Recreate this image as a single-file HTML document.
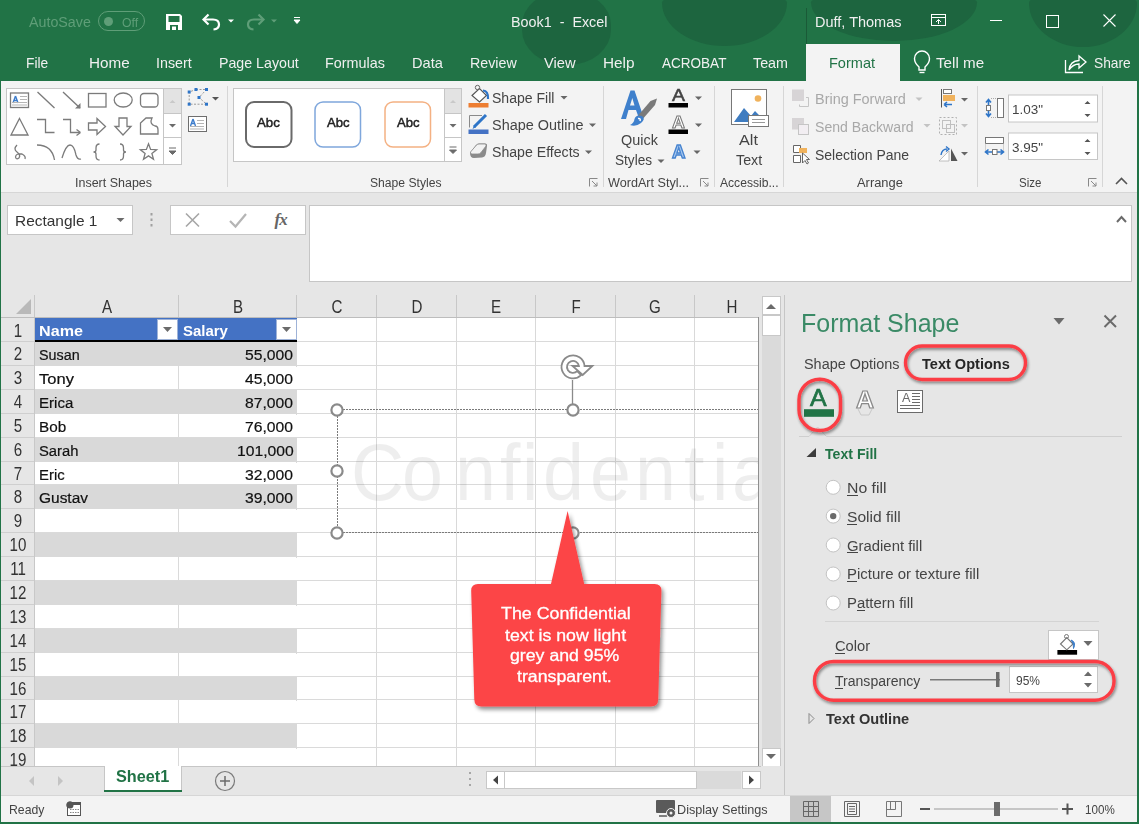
<!DOCTYPE html><html><head><meta charset="utf-8"><style>
html,body{margin:0;padding:0;}
body{width:1139px;height:824px;overflow:hidden;position:relative;font-family:"Liberation Sans", sans-serif;}
.t{position:absolute;white-space:nowrap;}
.r{position:absolute;box-sizing:border-box;}
svg.r{overflow:visible;}
</style></head><body>
<div class="r" style="left:0;top:0;width:1139px;height:824px;background:#217346"></div>
<div class="r" style="left:522px;top:-8px;width:89px;height:73px;border-radius:45% 45% 48% 48%;background:#1d653f;"></div>
<div class="r" style="left:662px;top:-2px;width:125px;height:48px;border-radius:8% 8% 50% 50% / 10% 10% 90% 90%;background:#1d653f;"></div>
<div class="r" style="left:811px;top:-2px;width:166px;height:43px;border-radius:8% 8% 50% 50% / 10% 10% 90% 90%;background:#1d653f;"></div>
<div class="r" style="left:1029px;top:-2px;width:108px;height:49px;border-radius:8% 8% 50% 50% / 10% 10% 90% 90%;background:#1d653f;"></div>
<div class="t" style="left:29.20px;top:15.15px;font-size:14px;line-height:14px;color:#5f9e78;font-weight:normal;transform:scaleX(1.0181);transform-origin:0 0;">AutoSave</div>
<div class="r" style="left:98px;top:11px;width:47px;height:20px;border:1px solid #5f9e78;border-radius:10px;"></div>
<div class="r" style="left:103.5px;top:16.5px;width:9px;height:9px;background:#5f9e78;border-radius:50%;"></div>
<div class="t" style="left:121.80px;top:15.50px;font-size:13px;line-height:13px;color:#5f9e78;font-weight:normal;transform:scaleX(0.9419);transform-origin:0 0;">Off</div>
<div class="t" style="left:510.60px;top:15.15px;font-size:14px;line-height:14px;color:#f0f0f0;font-weight:normal;transform:scaleX(1.0244);transform-origin:0 0;">Book1&nbsp; - &nbsp;Excel</div>
<div class="t" style="left:814.50px;top:15.15px;font-size:14px;line-height:14px;color:#f0f0f0;font-weight:normal;transform:scaleX(1.0359);transform-origin:0 0;">Duff, Thomas</div>
<div class="t" style="left:26.30px;top:55.30px;font-size:15px;line-height:15px;color:#f0f0f0;font-weight:normal;transform:scaleX(0.9174);transform-origin:0 0;">File</div>
<div class="t" style="left:88.50px;top:55.30px;font-size:15px;line-height:15px;color:#f0f0f0;font-weight:normal;transform:scaleX(1.0175);transform-origin:0 0;">Home</div>
<div class="t" style="left:156.30px;top:55.30px;font-size:15px;line-height:15px;color:#f0f0f0;font-weight:normal;transform:scaleX(0.9520);transform-origin:0 0;">Insert</div>
<div class="t" style="left:218.80px;top:55.30px;font-size:15px;line-height:15px;color:#f0f0f0;font-weight:normal;transform:scaleX(0.9466);transform-origin:0 0;">Page Layout</div>
<div class="t" style="left:325.20px;top:55.30px;font-size:15px;line-height:15px;color:#f0f0f0;font-weight:normal;transform:scaleX(0.9568);transform-origin:0 0;">Formulas</div>
<div class="t" style="left:412.30px;top:55.30px;font-size:15px;line-height:15px;color:#f0f0f0;font-weight:normal;transform:scaleX(0.9748);transform-origin:0 0;">Data</div>
<div class="t" style="left:470.20px;top:55.30px;font-size:15px;line-height:15px;color:#f0f0f0;font-weight:normal;transform:scaleX(0.9493);transform-origin:0 0;">Review</div>
<div class="t" style="left:544.00px;top:55.30px;font-size:15px;line-height:15px;color:#f0f0f0;font-weight:normal;transform:scaleX(0.9783);transform-origin:0 0;">View</div>
<div class="t" style="left:603.00px;top:55.30px;font-size:15px;line-height:15px;color:#f0f0f0;font-weight:normal;transform:scaleX(1.0227);transform-origin:0 0;">Help</div>
<div class="t" style="left:661.60px;top:55.30px;font-size:15px;line-height:15px;color:#f0f0f0;font-weight:normal;transform:scaleX(0.9020);transform-origin:0 0;">ACROBAT</div>
<div class="t" style="left:753.00px;top:55.30px;font-size:15px;line-height:15px;color:#f0f0f0;font-weight:normal;transform:scaleX(0.9537);transform-origin:0 0;">Team</div>
<div class="r" style="left:806px;top:44px;width:94px;height:38px;background:#f3f3f3;"></div>
<div class="t" style="left:829.00px;top:55.30px;font-size:15px;line-height:15px;color:#217346;font-weight:normal;transform:scaleX(0.9684);transform-origin:0 0;">Format</div>
<div class="t" style="left:936.40px;top:55.30px;font-size:15px;line-height:15px;color:#f0f0f0;font-weight:normal;transform:scaleX(1.0126);transform-origin:0 0;">Tell me</div>
<div class="t" style="left:1094.00px;top:55.30px;font-size:15px;line-height:15px;color:#f0f0f0;font-weight:normal;transform:scaleX(0.9175);transform-origin:0 0;">Share</div>
<div class="r" style="left:1px;top:81px;width:1136px;height:112px;background:#f3f3f3;border-bottom:1px solid #d6d6d6;"></div>
<div class="r" style="left:1px;top:193px;width:1136px;height:102px;background:#e6e6e6;"></div>
<div class="r" style="left:7px;top:205px;width:126px;height:30px;background:#fff;border:1px solid #c6c6c6;"></div>
<div class="t" style="left:14.50px;top:213.00px;font-size:15px;line-height:15px;color:#333;font-weight:normal;transform:scaleX(1.0300);transform-origin:0 0;">Rectangle 1</div>
<div class="r" style="left:170px;top:205px;width:136px;height:30px;background:#fff;border:1px solid #c6c6c6;"></div>
<div class="r" style="left:309px;top:205px;width:823px;height:77px;background:#fff;border:1px solid #c6c6c6;"></div>
<svg class="r" style="left:0px;top:0px;pointer-events:none;" width="1139" height="824" viewBox="0 0 1139 824"><rect x="227" y="86" width="1" height="101" fill="#d6d6d6"/><rect x="603" y="86" width="1" height="101" fill="#d6d6d6"/><rect x="714" y="86" width="1" height="101" fill="#d6d6d6"/><rect x="783" y="86" width="1" height="101" fill="#d6d6d6"/><rect x="977" y="86" width="1" height="101" fill="#d6d6d6"/><rect x="1102" y="86" width="1" height="101" fill="#d6d6d6"/><rect x="6.5" y="88.5" width="175" height="76" fill="#fff" stroke="#c6c6c6"/><rect x="164" y="89" width="17" height="24" fill="#e3e3e3"/><path d="M163.5 88.5 V164.5 M163.5 113.5 H181.5 M163.5 137.5 H181.5" stroke="#c6c6c6" fill="none"/><path d="M169.5 103 h6 l-3 -3 z" fill="#c9c9c9"/><path d="M169 124 h7 l-3.5 3.5 z" fill="#6b6b6b"/><path d="M169 148 h7 M169 151 h7 l-3.5 3.5 z" stroke="#6b6b6b" stroke-width="1" fill="#6b6b6b"/><rect x="10.5" y="93" width="18" height="14.5" stroke="#7b7b7b" stroke-width="1.3" fill="none"/><path d="M15.5 96 L13 103 M15.5 96 L18 103 M14 100.5 H17" stroke="#3d7ccb" stroke-width="1.4" fill="none"/><path d="M20 96.5 H27 M20 99.5 H27 M12 102.5 H27 M12 105 H27" stroke="#b5b5b5" stroke-width="1" fill="none"/><path d="M37.5 92 L54.5 108" stroke="#7b7b7b" stroke-width="1.3" fill="none"/><path d="M63 92 L80 108" stroke="#7b7b7b" stroke-width="1.3" fill="none"/><path d="M80.5 108.5 L80.5 103 L75 108.5 Z" fill="#7b7b7b"/><rect x="88.5" y="93.5" width="17.5" height="13.5" stroke="#7b7b7b" stroke-width="1.3" fill="none"/><ellipse cx="123.2" cy="100" rx="9" ry="7" stroke="#7b7b7b" stroke-width="1.3" fill="none"/><rect x="140.5" y="93.5" width="17.5" height="13.5" rx="3.5" stroke="#7b7b7b" stroke-width="1.3" fill="none"/><path d="M19.5 118.5 L28 135 H11 Z" stroke="#7b7b7b" stroke-width="1.3" fill="none"/><path d="M37 119.5 H45.5 V132.5 H54.5" stroke="#7b7b7b" stroke-width="1.3" fill="none"/><path d="M63 119.5 H70.5 V132.5 H80" stroke="#7b7b7b" stroke-width="1.3" fill="none"/><path d="M80.5 132.5 L76.5 129.5 M80.5 132.5 L76.5 135.5" stroke="#7b7b7b" stroke-width="1.3" fill="none"/><path d="M88.5 123 H97 V118.5 L105.5 126.5 L97 134.5 V130 H88.5 Z" stroke="#7b7b7b" stroke-width="1.3" fill="none"/><path d="M119 118 H127 V126.5 H131 L123 135 L115 126.5 H119 Z" stroke="#7b7b7b" stroke-width="1.3" fill="none"/><path d="M140.5 134 V123 L146 118 H152 Q149 124 155 126 Q158 126 158 130 V134 Z" stroke="#7b7b7b" stroke-width="1.3" fill="none"/><path d="M17 145 Q13 149 17 152 Q21 155 19 158 Q16 160 15.5 157 Q16 153 22 154 Q26 156 25 159" stroke="#7b7b7b" stroke-width="1.3" fill="none"/><path d="M37 145 Q52 145 54.5 160" stroke="#7b7b7b" stroke-width="1.3" fill="none"/><path d="M62 158 Q66 145 70 145 Q74 145 76 155 Q77.5 160 81 159" stroke="#7b7b7b" stroke-width="1.3" fill="none"/><path d="M99.5 144 Q96 144 96 148 V150 Q96 152 93.5 152 Q96 152 96 154 V156 Q96 160 99.5 160" stroke="#7b7b7b" stroke-width="1.3" fill="none"/><path d="M120 144 Q123.5 144 123.5 148 V150 Q123.5 152 126 152 Q123.5 152 123.5 154 V156 Q123.5 160 120 160" stroke="#7b7b7b" stroke-width="1.3" fill="none"/><polygon points="148.5,143.8 150.6,149.4 156.6,149.7 151.9,153.4 153.5,159.2 148.5,155.9 143.5,159.2 145.1,153.4 140.4,149.7 146.4,149.4" stroke="#7b7b7b" stroke-width="1.3" fill="none"/><path d="M196 89.5 L206.5 89.5 L199 97.5 L206.5 104.2 L189.2 104.2 L189.2 92 Z" stroke="#9a9a9a" stroke-width="1" stroke-dasharray="2,1.5" fill="none"/><rect x="187.7" y="90.5" width="3" height="3" fill="#2e75c8"/><rect x="194.5" y="88.0" width="3" height="3" fill="#2e75c8"/><rect x="205.0" y="88.0" width="3" height="3" fill="#2e75c8"/><rect x="197.5" y="96.0" width="3" height="3" fill="#2e75c8"/><rect x="187.7" y="102.7" width="3" height="3" fill="#2e75c8"/><rect x="205.0" y="102.7" width="3" height="3" fill="#2e75c8"/><path d="M212 97 h7 l-3.5 3.5 z" fill="#555"/><rect x="188.5" y="116.5" width="18" height="15" fill="#fff" stroke="#6e6e6e"/><path d="M193 119 L190.5 126 M193 119 L195.5 126 M191.5 123.5 H194.5" stroke="#3d7ccb" stroke-width="1.4" fill="none"/><path d="M197 120.5 H204 M197 123.5 H204 M190 126.5 H204 M190 129 H204" stroke="#b5b5b5" stroke-width="1" fill="none"/><rect x="233.5" y="88.5" width="228" height="73" fill="#fff" stroke="#c6c6c6"/><rect x="445" y="89" width="16" height="24" fill="#e3e3e3"/><path d="M444.5 88.5 V161.5 M444.5 113.5 H461.5 M444.5 137.5 H461.5" stroke="#c6c6c6" fill="none"/><path d="M450 103 h6 l-3 -3 z" fill="#c9c9c9"/><path d="M449.5 124 h7 l-3.5 3.5 z" fill="#6b6b6b"/><path d="M449.5 147 h7 M449.5 150 h7 l-3.5 3.5 z" stroke="#6b6b6b" stroke-width="1" fill="#6b6b6b"/><rect x="246" y="102" width="45.5" height="45" rx="8" fill="#fff" stroke="#6a6a6a" stroke-width="2"/><rect x="315" y="102" width="45.5" height="45" rx="8" fill="#fff" stroke="#7fa7dc" stroke-width="1.5"/><rect x="385" y="102" width="45.5" height="45" rx="8" fill="#fff" stroke="#f4b183" stroke-width="1.5"/><rect x="468.5" y="103" width="20" height="4.5" fill="#ed7d31"/><path d="M472 95.5 L479.5 88.5 L486.5 95.5 L479.5 102 Z" fill="#fff" stroke="#555" stroke-width="1.1"/><circle cx="477.5" cy="87.5" r="2.2" fill="none" stroke="#666" stroke-width="1"/><path d="M483 90.5 Q488.5 91 488 99" stroke="#2e75c8" stroke-width="2.2" fill="none"/><rect x="468.5" y="129.5" width="20" height="4.5" fill="#4472c4"/><path d="M469.5 127.5 V115.5 H482" stroke="#8a8a8a" stroke-width="1" fill="none"/><path d="M474 127 L486 115" stroke="#2e75c8" stroke-width="3" fill="none"/><path d="M472.5 129 L474 125.5 L475.8 127.2 Z" fill="#2e75c8"/><path d="M470 153 L476 145 Q477 143.5 479 143.5 L485 143.5 Q487.5 143.5 487 146 L486 153 Q485.5 157 482 157.5 L474 158 Q470 158 470 153 Z" fill="#8a8a8a"/><path d="M470.5 152 L476.5 145 Q477.5 144 479 144 L485 144 Q486.5 144 486 146 L481 152.5 Q480 154 478 154 L472 154 Q470 154 470.5 152 Z" fill="#f2f2f2" stroke="#8a8a8a" stroke-width="0.8"/><path d="M560.5 96 h7 l-3.5 3.5 z" fill="#666"/><path d="M589 123.5 h7 l-3.5 3.5 z" fill="#666"/><path d="M585 150.5 h7 l-3.5 3.5 z" fill="#666"/><path d="M695 96.5 h7 l-3.5 3.5 z" fill="#666"/><path d="M695 123.5 h7 l-3.5 3.5 z" fill="#666"/><path d="M693.5 150.5 h7 l-3.5 3.5 z" fill="#666"/><path d="M657.5 159.5 h7 l-3.5 3.5 z" fill="#666"/><path d="M915.5 97.5 h7 l-3.5 3.5 z" fill="#c3c3c3"/><path d="M923.5 124 h7 l-3.5 3.5 z" fill="#c3c3c3"/><path d="M961 98 h7 l-3.5 3.5 z" fill="#666"/><path d="M961 124 h7 l-3.5 3.5 z" fill="#c3c3c3"/><path d="M961 152 h7 l-3.5 3.5 z" fill="#666"/><path d="M589.5 186.5 V178.5 H597.5" stroke="#888" stroke-width="1" fill="none"/><path d="M592 181 L597 186 M597 182.5 V186 H593.5" stroke="#888" stroke-width="1" fill="none"/><path d="M700.5 186.5 V178.5 H708.5" stroke="#888" stroke-width="1" fill="none"/><path d="M703 181 L708 186 M708 182.5 V186 H704.5" stroke="#888" stroke-width="1" fill="none"/><path d="M1088.5 186.5 V178.5 H1096.5" stroke="#888" stroke-width="1" fill="none"/><path d="M1091 181 L1096 186 M1096 182.5 V186 H1092.5" stroke="#888" stroke-width="1" fill="none"/><path d="M621 119 L630.5 90.5 L634.5 90.5 L643.5 117 L638.5 117 L636 110 L628.5 110 L626 119 Z M630 105.5 L634.5 105.5 L632.3 98 Z" fill="#3f80cc"/><path d="M636 118 L650.5 101 L657 98.5 L655 105 L641 121 Z" fill="#7a7a7a"/><path d="M642 116 Q646 119 641 123 Q636 127 630 125 Q634 123 634.5 119 Q636 114 642 116 Z" fill="#3f80cc"/><path d="M638 118.5 Q641 118 640 121" stroke="#fff" stroke-width="1.5" fill="none"/><rect x="668.5" y="103" width="19.5" height="4.5" fill="#000"/><rect x="668.5" y="129.5" width="19.5" height="4.5" fill="#000"/><rect x="731.5" y="89.5" width="35" height="35" fill="#fff" stroke="#777"/><circle cx="758" cy="98.5" r="3.3" fill="#f0b25c"/><path d="M734 122 L744 108 L751 116 L755 111 L762 118 V122 Z" fill="#3f7cc0"/><rect x="748.5" y="115.5" width="20" height="11" fill="#fff" stroke="#777"/><path d="M752 119.5 H765 M752 122.5 H765" stroke="#999" stroke-width="1"/><rect x="792" y="89.5" width="12" height="11.5" fill="#d7d4d6"/><path d="M799.5 104.5 V106.5 H808.5 V97.5 H806" stroke="#c5c5c5" stroke-width="1" fill="none"/><rect x="792" y="118" width="12" height="11.5" fill="#d7d4d6"/><rect x="798.5" y="124.5" width="10" height="10" fill="#f2eef2" stroke="#c5c5c5"/><path d="M793.5 145.5 H800.5 V152.5 H793.5 Z M793.5 155.5 H800.5 V162.5 H793.5 Z" stroke="#666" stroke-width="1" fill="#fff"/><rect x="799" y="148" width="8" height="5" fill="#f0b25c"/><path d="M802.5 153 L802.5 163 L805 160.5 L807 164 L808.5 163 L806.5 159.5 L809.5 159.5 Z" fill="#fff" stroke="#555" stroke-width="0.9"/><path d="M941.5 89 V107.5" stroke="#555" stroke-width="1"/><rect x="943.5" y="89.5" width="8" height="4" fill="#fff" stroke="#777"/><rect x="943" y="95" width="12" height="6" fill="#f0b25c"/><path d="M944 104.5 H952 M944 104.5 L947 102 M944 104.5 L947 107" stroke="#2e75c8" stroke-width="1.6" fill="none"/><path d="M939.5 117.5 h17 v17 h-17 z" stroke="#b0b0b0" stroke-width="1" stroke-dasharray="2,2" fill="none"/><rect x="942.5" y="120.5" width="8" height="8" fill="none" stroke="#c0c0c0"/><rect x="946.5" y="124.5" width="8" height="8" fill="none" stroke="#c0c0c0"/><path d="M939 161 L949 151 V161 Z" fill="#fff" stroke="#b0b0b0" stroke-width="0.8"/><path d="M951 148.5 V161 H957.5 Z" fill="#555"/><path d="M941 155 Q942 149 947 149" stroke="#2e75c8" stroke-width="1.4" fill="none"/><path d="M946 146.5 L949 149 L946 151.5" stroke="#2e75c8" stroke-width="1.4" fill="none"/><path d="M988.5 100 V116 M986 102.5 L988.5 99.5 L991 102.5 M986 113.5 L988.5 116.5 L991 113.5" stroke="#2e75c8" stroke-width="1.6" fill="none"/><rect x="986.5" y="105.5" width="4" height="5" fill="#fff" stroke="#777"/><path d="M991 98.5 H997 M991 117.5 H997" stroke="#aaa" stroke-width="1" stroke-dasharray="1,1"/><rect x="997.5" y="98.5" width="6" height="19" fill="#fff" stroke="#777"/><rect x="985.5" y="137.5" width="18" height="6" fill="#fff" stroke="#777"/><path d="M985.5 143.5 V152 M1003.5 143.5 V152" stroke="#aaa" stroke-width="1" stroke-dasharray="1,1"/><path d="M986 152 H1003 M988.5 149.5 L985.5 152 L988.5 154.5 M1000.5 149.5 L1003.5 152 L1000.5 154.5" stroke="#2e75c8" stroke-width="1.6" fill="none"/><rect x="992.5" y="149.5" width="4.5" height="5" fill="#fff" stroke="#777"/><rect x="1008.5" y="95" width="89" height="27" fill="#fff" stroke="#c6c6c6"/><rect x="1008.5" y="133" width="89" height="26.5" fill="#fff" stroke="#c6c6c6"/><path d="M1084.5 104 h6 l-3 -3 z M1084.5 114 h6 l-3 3 z" fill="#555"/><path d="M1084.5 142 h6 l-3 -3 z M1084.5 152 h6 l-3 3 z" fill="#555"/><path d="M1116 184 L1121.5 178.5 L1127 184" stroke="#555" stroke-width="1.6" fill="none"/></svg>
<div class="t" style="left:74.60px;top:176.64px;font-size:12px;line-height:12px;color:#444;font-weight:normal;transform:scaleX(1.0405);transform-origin:0 0;">Insert Shapes</div>
<div class="t" style="left:369.50px;top:176.64px;font-size:12px;line-height:12px;color:#444;font-weight:normal;transform:scaleX(1.0113);transform-origin:0 0;">Shape Styles</div>
<div class="t" style="left:608.40px;top:176.64px;font-size:12px;line-height:12px;color:#444;font-weight:normal;transform:scaleX(1.0506);transform-origin:0 0;">WordArt Styl...</div>
<div class="t" style="left:719.50px;top:176.64px;font-size:12px;line-height:12px;color:#444;font-weight:normal;transform:scaleX(1.0086);transform-origin:0 0;">Accessib...</div>
<div class="t" style="left:856.70px;top:176.64px;font-size:12px;line-height:12px;color:#444;font-weight:normal;transform:scaleX(1.0749);transform-origin:0 0;">Arrange</div>
<div class="t" style="left:1018.90px;top:176.64px;font-size:12px;line-height:12px;color:#444;font-weight:normal;transform:scaleX(0.9571);transform-origin:0 0;">Size</div>
<div class="t" style="left:257.40px;top:116.92px;font-size:12.5px;line-height:12.5px;color:#222;font-weight:normal;transform:scaleX(1.0558);transform-origin:0 0;-webkit-text-stroke:0.45px #222;">Abc</div>
<div class="t" style="left:327.00px;top:116.92px;font-size:12.5px;line-height:12.5px;color:#222;font-weight:normal;transform:scaleX(1.0465);transform-origin:0 0;-webkit-text-stroke:0.45px #222;">Abc</div>
<div class="t" style="left:396.80px;top:116.92px;font-size:12.5px;line-height:12.5px;color:#222;font-weight:normal;transform:scaleX(1.0465);transform-origin:0 0;-webkit-text-stroke:0.45px #222;">Abc</div>
<div class="t" style="left:671.50px;top:87.96px;font-size:16px;line-height:16px;color:#444;font-weight:normal;transform:scaleX(1.2150);transform-origin:0 0;-webkit-text-stroke:0.5px #444;">A</div>
<div class="t" style="left:671.50px;top:114.66px;font-size:16px;line-height:16px;color:#fff;font-weight:bold;transform:scaleX(1.1207);transform-origin:0 0;-webkit-text-stroke:0.9px #777;">A</div>
<div class="t" style="left:671.50px;top:143.26px;font-size:18px;line-height:18px;color:#a9c9f0;font-weight:bold;transform:scaleX(1.0385);transform-origin:0 0;-webkit-text-stroke:1.3px #4683cf;">A</div>
<div class="t" style="left:491.80px;top:91.15px;font-size:14px;line-height:14px;color:#444;font-weight:normal;transform:scaleX(1.0032);transform-origin:0 0;">Shape Fill</div>
<div class="t" style="left:491.80px;top:117.95px;font-size:14px;line-height:14px;color:#444;font-weight:normal;transform:scaleX(1.0316);transform-origin:0 0;">Shape Outline</div>
<div class="t" style="left:491.80px;top:144.85px;font-size:14px;line-height:14px;color:#444;font-weight:normal;transform:scaleX(1.0081);transform-origin:0 0;">Shape Effects</div>
<div class="t" style="left:621.00px;top:133.15px;font-size:14px;line-height:14px;color:#444;font-weight:normal;transform:scaleX(1.0306);transform-origin:0 0;">Quick</div>
<div class="t" style="left:615.40px;top:152.65px;font-size:14px;line-height:14px;color:#444;font-weight:normal;transform:scaleX(0.9711);transform-origin:0 0;">Styles</div>
<div class="t" style="left:739.30px;top:133.15px;font-size:14px;line-height:14px;color:#444;font-weight:normal;transform:scaleX(1.1595);transform-origin:0 0;">Alt</div>
<div class="t" style="left:735.80px;top:152.65px;font-size:14px;line-height:14px;color:#444;font-weight:normal;transform:scaleX(1.0195);transform-origin:0 0;">Text</div>
<div class="t" style="left:814.70px;top:92.35px;font-size:14px;line-height:14px;color:#a8a8a8;font-weight:normal;transform:scaleX(1.0319);transform-origin:0 0;">Bring Forward</div>
<div class="t" style="left:814.70px;top:119.85px;font-size:14px;line-height:14px;color:#a8a8a8;font-weight:normal;transform:scaleX(1.0061);transform-origin:0 0;">Send Backward</div>
<div class="t" style="left:814.70px;top:147.85px;font-size:14px;line-height:14px;color:#444;font-weight:normal;transform:scaleX(0.9989);transform-origin:0 0;">Selection Pane</div>
<div class="t" style="left:1011.70px;top:103.30px;font-size:13px;line-height:13px;color:#444;font-weight:normal;transform:scaleX(1.0368);transform-origin:0 0;">1.03&quot;</div>
<div class="t" style="left:1011.70px;top:140.70px;font-size:13px;line-height:13px;color:#444;font-weight:normal;transform:scaleX(1.0368);transform-origin:0 0;">3.95&quot;</div>
<svg class="r" style="left:0px;top:0px;pointer-events:none;" width="1139" height="824" viewBox="0 0 1139 824"><path d="M166 14 H180 L182 16 V30 H166 Z" fill="#fff"/><rect x="168.5" y="16" width="11" height="6" fill="#217346"/><rect x="170" y="25" width="8" height="5" fill="#217346"/><rect x="172" y="26.5" width="4" height="3.5" fill="#fff"/><path d="M204 19.5 H213 Q219 19.5 219 24.5 Q219 29 213.5 29.5" stroke="#fff" stroke-width="2.2" fill="none"/><path d="M208.5 14.5 L203.5 19.5 L208.5 24.5" stroke="#fff" stroke-width="2.2" fill="none"/><path d="M228 19.5 h6 l-3 3 z" fill="#fff"/><path d="M263 19.5 H254 Q248 19.5 248 24.5 Q248 29 253.5 29.5" stroke="#5f9e78" stroke-width="2.2" fill="none"/><path d="M258.5 14.5 L263.5 19.5 L258.5 24.5" stroke="#5f9e78" stroke-width="2.2" fill="none"/><path d="M271 19.5 h6 l-3 3 z" fill="#5f9e78"/><path d="M294 17.5 h6 M294 20 h6 l-3 3.5 z" stroke="#fff" stroke-width="1" fill="#fff"/><rect x="931.5" y="14.5" width="14" height="11" fill="none" stroke="#fff" stroke-width="1"/><path d="M931.5 17.5 H945.5 M938.5 24 V19.5 M936 22 L938.5 19.5 L941 22" stroke="#fff" stroke-width="1" fill="none"/><path d="M990 20.5 H1002" stroke="#fff" stroke-width="1"/><rect x="1046.5" y="15.5" width="12" height="12" fill="none" stroke="#fff" stroke-width="1"/><path d="M1103.5 14.5 L1115.5 26.5 M1115.5 14.5 L1103.5 26.5" stroke="#fff" stroke-width="1.1"/><rect x="806" y="8" width="1" height="36" fill="#1a5a37"/><path d="M919 67 Q914.5 63 914.5 58.5 A7.5 7.5 0 0 1 929.5 58.5 Q929.5 63 925 67 V70 H919 Z" stroke="#fff" stroke-width="1.4" fill="none"/><path d="M919.5 72.5 H924.5" stroke="#fff" stroke-width="1.4"/><path d="M1065.5 60 V72.5 H1083" stroke="#fff" stroke-width="1.3" fill="none"/><path d="M1069 70 Q1070 61 1079 60.5 V56 L1086 62 L1079 68 V64 Q1073 64 1069 70 Z" stroke="#fff" stroke-width="1.3" fill="none"/></svg>
<div class="r" style="left:1px;top:295px;width:784px;height:471px;background:#e6e6e6;"></div>
<div class="r" style="left:35px;top:318px;width:723px;height:448px;background:#fff;"></div>
<svg class="r" style="left:0px;top:0px;pointer-events:none;" width="1139" height="824" viewBox="0 0 1139 824"><rect x="178" y="295" width="1" height="23" fill="#c8c8c8"/><rect x="296" y="295" width="1" height="23" fill="#c8c8c8"/><rect x="376" y="295" width="1" height="23" fill="#c8c8c8"/><rect x="456" y="295" width="1" height="23" fill="#c8c8c8"/><rect x="535" y="295" width="1" height="23" fill="#c8c8c8"/><rect x="615" y="295" width="1" height="23" fill="#c8c8c8"/><rect x="694" y="295" width="1" height="23" fill="#c8c8c8"/><rect x="34" y="295" width="1" height="471" fill="#c8c8c8"/><rect x="1" y="317" width="757" height="1" fill="#bdbdbd"/><rect x="178" y="318" width="1" height="448" fill="#d9d9d9"/><rect x="296" y="318" width="1" height="448" fill="#d9d9d9"/><rect x="376" y="318" width="1" height="448" fill="#d9d9d9"/><rect x="456" y="318" width="1" height="448" fill="#d9d9d9"/><rect x="535" y="318" width="1" height="448" fill="#d9d9d9"/><rect x="615" y="318" width="1" height="448" fill="#d9d9d9"/><rect x="694" y="318" width="1" height="448" fill="#d9d9d9"/><rect x="1" y="341" width="33" height="1" fill="#cfcfcf"/><rect x="35" y="341" width="723" height="1" fill="#dadada"/><rect x="1" y="365" width="33" height="1" fill="#cfcfcf"/><rect x="35" y="365" width="723" height="1" fill="#dadada"/><rect x="1" y="389" width="33" height="1" fill="#cfcfcf"/><rect x="35" y="389" width="723" height="1" fill="#dadada"/><rect x="1" y="413" width="33" height="1" fill="#cfcfcf"/><rect x="35" y="413" width="723" height="1" fill="#dadada"/><rect x="1" y="437" width="33" height="1" fill="#cfcfcf"/><rect x="35" y="437" width="723" height="1" fill="#dadada"/><rect x="1" y="461" width="33" height="1" fill="#cfcfcf"/><rect x="35" y="461" width="723" height="1" fill="#dadada"/><rect x="1" y="484" width="33" height="1" fill="#cfcfcf"/><rect x="35" y="484" width="723" height="1" fill="#dadada"/><rect x="1" y="508" width="33" height="1" fill="#cfcfcf"/><rect x="35" y="508" width="723" height="1" fill="#dadada"/><rect x="1" y="532" width="33" height="1" fill="#cfcfcf"/><rect x="35" y="532" width="723" height="1" fill="#dadada"/><rect x="1" y="556" width="33" height="1" fill="#cfcfcf"/><rect x="35" y="556" width="723" height="1" fill="#dadada"/><rect x="1" y="580" width="33" height="1" fill="#cfcfcf"/><rect x="35" y="580" width="723" height="1" fill="#dadada"/><rect x="1" y="604" width="33" height="1" fill="#cfcfcf"/><rect x="35" y="604" width="723" height="1" fill="#dadada"/><rect x="1" y="628" width="33" height="1" fill="#cfcfcf"/><rect x="35" y="628" width="723" height="1" fill="#dadada"/><rect x="1" y="652" width="33" height="1" fill="#cfcfcf"/><rect x="35" y="652" width="723" height="1" fill="#dadada"/><rect x="1" y="676" width="33" height="1" fill="#cfcfcf"/><rect x="35" y="676" width="723" height="1" fill="#dadada"/><rect x="1" y="699" width="33" height="1" fill="#cfcfcf"/><rect x="35" y="699" width="723" height="1" fill="#dadada"/><rect x="1" y="723" width="33" height="1" fill="#cfcfcf"/><rect x="35" y="723" width="723" height="1" fill="#dadada"/><rect x="1" y="747" width="33" height="1" fill="#cfcfcf"/><rect x="35" y="747" width="723" height="1" fill="#dadada"/><rect x="35" y="341" width="262" height="25" fill="#d9d9d9"/><rect x="35" y="367" width="262" height="22" fill="#ffffff"/><rect x="178" y="366" width="1" height="24" fill="#dadada"/><rect x="35" y="390" width="262" height="24" fill="#d9d9d9"/><rect x="35" y="415" width="262" height="22" fill="#ffffff"/><rect x="178" y="414" width="1" height="24" fill="#dadada"/><rect x="35" y="438" width="262" height="24" fill="#d9d9d9"/><rect x="35" y="463" width="262" height="21" fill="#ffffff"/><rect x="178" y="462" width="1" height="23" fill="#dadada"/><rect x="35" y="485" width="262" height="24" fill="#d9d9d9"/><rect x="35" y="510" width="262" height="22" fill="#ffffff"/><rect x="178" y="509" width="1" height="24" fill="#dadada"/><rect x="35" y="533" width="262" height="24" fill="#d9d9d9"/><rect x="35" y="558" width="262" height="22" fill="#ffffff"/><rect x="178" y="557" width="1" height="24" fill="#dadada"/><rect x="35" y="581" width="262" height="24" fill="#d9d9d9"/><rect x="35" y="606" width="262" height="22" fill="#ffffff"/><rect x="178" y="605" width="1" height="24" fill="#dadada"/><rect x="35" y="629" width="262" height="24" fill="#d9d9d9"/><rect x="35" y="654" width="262" height="22" fill="#ffffff"/><rect x="178" y="653" width="1" height="24" fill="#dadada"/><rect x="35" y="677" width="262" height="23" fill="#d9d9d9"/><rect x="35" y="701" width="262" height="22" fill="#ffffff"/><rect x="178" y="700" width="1" height="24" fill="#dadada"/><rect x="35" y="724" width="262" height="24" fill="#d9d9d9"/><rect x="35" y="749" width="262" height="22" fill="#ffffff"/><rect x="178" y="748" width="1" height="24" fill="#dadada"/><rect x="35" y="318" width="262" height="22" fill="#4472c4"/><rect x="35" y="340" width="262" height="2" fill="#000"/><rect x="157.5" y="319.5" width="20" height="20" fill="#fff" stroke="#9fb3d8" stroke-width="1"/><path d="M163 327 h9 l-4.5 5 z" fill="#6b6b6b"/><rect x="276.5" y="319.5" width="20" height="20" fill="#fff" stroke="#9fb3d8" stroke-width="1"/><path d="M282 327 h9 l-4.5 5 z" fill="#6b6b6b"/><rect x="758" y="317" width="1" height="449" fill="#8f8f8f"/><rect x="762" y="297" width="19" height="469" fill="#dadada"/><rect x="762.5" y="296.5" width="18" height="18" fill="#fff" stroke="#c8c8c8"/><path d="M766 309 h10 l-5 -5 z" fill="#6b6b6b"/><rect x="762.5" y="315.5" width="18" height="20" fill="#fff" stroke="#c8c8c8"/><rect x="762.5" y="748.5" width="18" height="18" fill="#fff" stroke="#c8c8c8"/><path d="M766 754 h10 l-5 5 z" fill="#6b6b6b"/><rect x="784" y="295" width="1" height="500" fill="#c6c6c6"/></svg>
<div class="t" style="left:6.5px;width:200px;text-align:center;top:297.76px;font-size:18px;line-height:18px;color:#333;font-weight:normal;transform:scaleX(0.84);transform-origin:50% 0;">A</div>
<div class="t" style="left:137.5px;width:200px;text-align:center;top:297.76px;font-size:18px;line-height:18px;color:#333;font-weight:normal;transform:scaleX(0.84);transform-origin:50% 0;">B</div>
<div class="t" style="left:236.5px;width:200px;text-align:center;top:297.76px;font-size:18px;line-height:18px;color:#333;font-weight:normal;transform:scaleX(0.84);transform-origin:50% 0;">C</div>
<div class="t" style="left:316.5px;width:200px;text-align:center;top:297.76px;font-size:18px;line-height:18px;color:#333;font-weight:normal;transform:scaleX(0.84);transform-origin:50% 0;">D</div>
<div class="t" style="left:396.0px;width:200px;text-align:center;top:297.76px;font-size:18px;line-height:18px;color:#333;font-weight:normal;transform:scaleX(0.84);transform-origin:50% 0;">E</div>
<div class="t" style="left:475.5px;width:200px;text-align:center;top:297.76px;font-size:18px;line-height:18px;color:#333;font-weight:normal;transform:scaleX(0.84);transform-origin:50% 0;">F</div>
<div class="t" style="left:555.0px;width:200px;text-align:center;top:297.76px;font-size:18px;line-height:18px;color:#333;font-weight:normal;transform:scaleX(0.84);transform-origin:50% 0;">G</div>
<div class="t" style="left:632.0px;width:200px;text-align:center;top:297.76px;font-size:18px;line-height:18px;color:#333;font-weight:normal;transform:scaleX(0.84);transform-origin:50% 0;">H</div>
<div class="t" style="left:3.0px;width:30px;text-align:center;top:321.76px;font-size:18px;line-height:18px;color:#333;font-weight:normal;transform:scaleX(0.84);transform-origin:50% 0;">1</div>
<div class="t" style="left:3.0px;width:30px;text-align:center;top:344.76px;font-size:18px;line-height:18px;color:#333;font-weight:normal;transform:scaleX(0.84);transform-origin:50% 0;">2</div>
<div class="t" style="left:3.0px;width:30px;text-align:center;top:368.76px;font-size:18px;line-height:18px;color:#333;font-weight:normal;transform:scaleX(0.84);transform-origin:50% 0;">3</div>
<div class="t" style="left:3.0px;width:30px;text-align:center;top:392.76px;font-size:18px;line-height:18px;color:#333;font-weight:normal;transform:scaleX(0.84);transform-origin:50% 0;">4</div>
<div class="t" style="left:3.0px;width:30px;text-align:center;top:416.76px;font-size:18px;line-height:18px;color:#333;font-weight:normal;transform:scaleX(0.84);transform-origin:50% 0;">5</div>
<div class="t" style="left:3.0px;width:30px;text-align:center;top:440.76px;font-size:18px;line-height:18px;color:#333;font-weight:normal;transform:scaleX(0.84);transform-origin:50% 0;">6</div>
<div class="t" style="left:3.0px;width:30px;text-align:center;top:464.76px;font-size:18px;line-height:18px;color:#333;font-weight:normal;transform:scaleX(0.84);transform-origin:50% 0;">7</div>
<div class="t" style="left:3.0px;width:30px;text-align:center;top:487.76px;font-size:18px;line-height:18px;color:#333;font-weight:normal;transform:scaleX(0.84);transform-origin:50% 0;">8</div>
<div class="t" style="left:3.0px;width:30px;text-align:center;top:511.76px;font-size:18px;line-height:18px;color:#333;font-weight:normal;transform:scaleX(0.84);transform-origin:50% 0;">9</div>
<div class="t" style="left:3.0px;width:30px;text-align:center;top:535.76px;font-size:18px;line-height:18px;color:#333;font-weight:normal;transform:scaleX(0.84);transform-origin:50% 0;">10</div>
<div class="t" style="left:3.0px;width:30px;text-align:center;top:559.76px;font-size:18px;line-height:18px;color:#333;font-weight:normal;transform:scaleX(0.84);transform-origin:50% 0;">11</div>
<div class="t" style="left:3.0px;width:30px;text-align:center;top:583.76px;font-size:18px;line-height:18px;color:#333;font-weight:normal;transform:scaleX(0.84);transform-origin:50% 0;">12</div>
<div class="t" style="left:3.0px;width:30px;text-align:center;top:607.76px;font-size:18px;line-height:18px;color:#333;font-weight:normal;transform:scaleX(0.84);transform-origin:50% 0;">13</div>
<div class="t" style="left:3.0px;width:30px;text-align:center;top:631.76px;font-size:18px;line-height:18px;color:#333;font-weight:normal;transform:scaleX(0.84);transform-origin:50% 0;">14</div>
<div class="t" style="left:3.0px;width:30px;text-align:center;top:655.76px;font-size:18px;line-height:18px;color:#333;font-weight:normal;transform:scaleX(0.84);transform-origin:50% 0;">15</div>
<div class="t" style="left:3.0px;width:30px;text-align:center;top:679.76px;font-size:18px;line-height:18px;color:#333;font-weight:normal;transform:scaleX(0.84);transform-origin:50% 0;">16</div>
<div class="t" style="left:3.0px;width:30px;text-align:center;top:702.76px;font-size:18px;line-height:18px;color:#333;font-weight:normal;transform:scaleX(0.84);transform-origin:50% 0;">17</div>
<div class="t" style="left:3.0px;width:30px;text-align:center;top:726.76px;font-size:18px;line-height:18px;color:#333;font-weight:normal;transform:scaleX(0.84);transform-origin:50% 0;">18</div>
<div class="t" style="left:3.0px;width:30px;text-align:center;top:750.76px;font-size:18px;line-height:18px;color:#333;font-weight:normal;transform:scaleX(0.84);transform-origin:50% 0;">19</div>
<div class="t" style="left:38.70px;top:322.90px;font-size:15px;line-height:15px;color:#fff;font-weight:bold;transform:scaleX(1.0758);transform-origin:0 0;">Name</div>
<div class="t" style="left:182.50px;top:322.90px;font-size:15px;line-height:15px;color:#fff;font-weight:bold;transform:scaleX(0.9978);transform-origin:0 0;">Salary</div>
<div class="t" style="left:38.50px;top:346.88px;font-size:15.5px;line-height:15.5px;color:#111;font-weight:normal;transform:scaleX(0.9250);transform-origin:0 0;-webkit-text-stroke:0.2px #111;">Susan</div>
<div class="t" style="left:245.20px;top:346.88px;font-size:15.5px;line-height:15.5px;color:#111;font-weight:normal;transform:scaleX(1.0127);transform-origin:0 0;-webkit-text-stroke:0.2px #111;">55,000</div>
<div class="t" style="left:38.50px;top:370.88px;font-size:15.5px;line-height:15.5px;color:#111;font-weight:normal;transform:scaleX(1.0671);transform-origin:0 0;-webkit-text-stroke:0.2px #111;">Tony</div>
<div class="t" style="left:245.20px;top:370.88px;font-size:15.5px;line-height:15.5px;color:#111;font-weight:normal;transform:scaleX(1.0127);transform-origin:0 0;-webkit-text-stroke:0.2px #111;">45,000</div>
<div class="t" style="left:38.50px;top:394.88px;font-size:15.5px;line-height:15.5px;color:#111;font-weight:normal;transform:scaleX(0.9718);transform-origin:0 0;-webkit-text-stroke:0.2px #111;">Erica</div>
<div class="t" style="left:245.20px;top:394.88px;font-size:15.5px;line-height:15.5px;color:#111;font-weight:normal;transform:scaleX(1.0127);transform-origin:0 0;-webkit-text-stroke:0.2px #111;">87,000</div>
<div class="t" style="left:38.50px;top:418.88px;font-size:15.5px;line-height:15.5px;color:#111;font-weight:normal;transform:scaleX(0.9855);transform-origin:0 0;-webkit-text-stroke:0.2px #111;">Bob</div>
<div class="t" style="left:245.20px;top:418.88px;font-size:15.5px;line-height:15.5px;color:#111;font-weight:normal;transform:scaleX(1.0127);transform-origin:0 0;-webkit-text-stroke:0.2px #111;">76,000</div>
<div class="t" style="left:38.50px;top:442.88px;font-size:15.5px;line-height:15.5px;color:#111;font-weight:normal;transform:scaleX(0.9541);transform-origin:0 0;-webkit-text-stroke:0.2px #111;">Sarah</div>
<div class="t" style="left:236.50px;top:442.88px;font-size:15.5px;line-height:15.5px;color:#111;font-weight:normal;transform:scaleX(1.0125);transform-origin:0 0;-webkit-text-stroke:0.2px #111;">101,000</div>
<div class="t" style="left:38.50px;top:466.88px;font-size:15.5px;line-height:15.5px;color:#111;font-weight:normal;transform:scaleX(0.9625);transform-origin:0 0;-webkit-text-stroke:0.2px #111;">Eric</div>
<div class="t" style="left:245.20px;top:466.88px;font-size:15.5px;line-height:15.5px;color:#111;font-weight:normal;transform:scaleX(1.0127);transform-origin:0 0;-webkit-text-stroke:0.2px #111;">32,000</div>
<div class="t" style="left:38.50px;top:489.88px;font-size:15.5px;line-height:15.5px;color:#111;font-weight:normal;transform:scaleX(0.9980);transform-origin:0 0;-webkit-text-stroke:0.2px #111;">Gustav</div>
<div class="t" style="left:245.20px;top:489.88px;font-size:15.5px;line-height:15.5px;color:#111;font-weight:normal;transform:scaleX(1.0127);transform-origin:0 0;-webkit-text-stroke:0.2px #111;">39,000</div>
<svg class="r" style="left:0px;top:0px;pointer-events:none;" width="1139" height="824" viewBox="0 0 1139 824"><path d="M16 314 L31 314 L31 299 Z" fill="#b9b9b9"/></svg>
<svg class="r" style="left:0px;top:0px;pointer-events:none;" width="1139" height="824" viewBox="0 0 1139 824"><path d="M116.5 218 h8 l-4 4 z" fill="#6b6b6b"/><path d="M151.5 213 v2.5 M151.5 218.5 v2.5 M151.5 224 v2.5" stroke="#a0a0a0" stroke-width="2"/><path d="M186 213.5 L199 226.5 M199 213.5 L186 226.5" stroke="#a6a6a6" stroke-width="1.6"/><path d="M230 221 L235.5 226.5 L246 214" stroke="#b5b5b5" stroke-width="2.2" fill="none"/><path d="M1117 222 L1121.5 217 L1126 222" stroke="#6b6b6b" stroke-width="2" fill="none"/></svg>
<div class="t" style="left:274.5px;top:211px;font-family:'Liberation Serif',serif;font-style:italic;font-weight:bold;font-size:17px;line-height:17px;color:#666;letter-spacing:-1px;">fx</div>
<div class="r" style="left:35px;top:318px;width:723px;height:448px;overflow:hidden;">
<div class="t" style="left:315.61px;top:115.28px;font-size:80px;line-height:80px;color:rgba(0,0,0,0.065);font-weight:normal;transform:scaleX(0.9200);transform-origin:0 0;">C</div>
<div class="t" style="left:366.63px;top:115.28px;font-size:80px;line-height:80px;color:rgba(0,0,0,0.065);font-weight:normal;transform:scaleX(0.9200);transform-origin:0 0;">o</div>
<div class="t" style="left:420.23px;top:115.28px;font-size:80px;line-height:80px;color:rgba(0,0,0,0.065);font-weight:normal;transform:scaleX(0.9200);transform-origin:0 0;">n</div>
<div class="t" style="left:465.15px;top:115.28px;font-size:80px;line-height:80px;color:rgba(0,0,0,0.065);font-weight:normal;transform:scaleX(0.9200);transform-origin:0 0;">f</div>
<div class="t" style="left:486.61px;top:115.28px;font-size:80px;line-height:80px;color:rgba(0,0,0,0.065);font-weight:normal;transform:scaleX(0.9200);transform-origin:0 0;">i</div>
<div class="t" style="left:507.68px;top:115.28px;font-size:80px;line-height:80px;color:rgba(0,0,0,0.065);font-weight:normal;transform:scaleX(0.9200);transform-origin:0 0;">d</div>
<div class="t" style="left:554.58px;top:115.28px;font-size:80px;line-height:80px;color:rgba(0,0,0,0.065);font-weight:normal;transform:scaleX(0.9200);transform-origin:0 0;">e</div>
<div class="t" style="left:600.43px;top:115.28px;font-size:80px;line-height:80px;color:rgba(0,0,0,0.065);font-weight:normal;transform:scaleX(0.9200);transform-origin:0 0;">n</div>
<div class="t" style="left:648.79px;top:115.28px;font-size:80px;line-height:80px;color:rgba(0,0,0,0.065);font-weight:normal;transform:scaleX(0.9200);transform-origin:0 0;">t</div>
<div class="t" style="left:677.41px;top:115.28px;font-size:80px;line-height:80px;color:rgba(0,0,0,0.065);font-weight:normal;transform:scaleX(0.9200);transform-origin:0 0;">i</div>
<div class="t" style="left:697.08px;top:115.28px;font-size:80px;line-height:80px;color:rgba(0,0,0,0.065);font-weight:normal;transform:scaleX(0.9200);transform-origin:0 0;">a</div>
</div>
<svg class="r" style="left:0px;top:0px;pointer-events:none;" width="1139" height="824" viewBox="0 0 1139 824"><path d="M337 409.5 H758 M337 532.5 H758 M337.5 410 V533" stroke="#7a7a7a" stroke-width="1" stroke-dasharray="2,1" fill="none"/><path d="M572.5 380 V404" stroke="#8a8a8a" stroke-width="1.3" fill="none"/><circle cx="337" cy="410" r="5.6" fill="#fff" stroke="#8a8a8a" stroke-width="2.2"/><circle cx="573" cy="410" r="5.6" fill="#fff" stroke="#8a8a8a" stroke-width="2.2"/><circle cx="337" cy="471" r="5.6" fill="#fff" stroke="#8a8a8a" stroke-width="2.2"/><circle cx="337" cy="533" r="5.6" fill="#fff" stroke="#8a8a8a" stroke-width="2.2"/><circle cx="573" cy="533" r="5.6" fill="#fff" stroke="#8a8a8a" stroke-width="2.2"/><path d="M581.1 375.1 A11.5 11.5 0 1 1 584.5 366 L592.4 366 L582.7 375 L572.5 366 L578.9 366 A6 6 0 1 0 577.2 371.2 Z" fill="#fff" stroke="#8a8a8a" stroke-width="1.8" stroke-linejoin="miter"/></svg>
<svg class="r" style="left:0px;top:0px;pointer-events:none;" width="1139" height="824" viewBox="0 0 1139 824"><defs><filter id="sh" x="-20%" y="-20%" width="140%" height="140%"><feGaussianBlur in="SourceAlpha" stdDeviation="2.2"/><feOffset dx="2" dy="3"/><feComponentTransfer><feFuncA type="linear" slope="0.45"/></feComponentTransfer><feMerge><feMergeNode/><feMergeNode in="SourceGraphic"/></feMerge></filter></defs><path filter="url(#sh)" fill="#fc4446" d="M478 584 L551 584 L567.6 511 L584.2 584 L654.6 584 Q661.6 584 661.4 591 L658.2 699.5 Q658 706.5 651 706.5 L481.5 706.5 Q474.5 706.5 474.3 699.5 L471.2 591 Q471 584 478 584 Z"/></svg>
<div class="t" style="left:500.50px;top:605.43px;font-size:16.5px;line-height:16.5px;color:#fff;font-weight:normal;transform:scaleX(1.0799);transform-origin:0 0;-webkit-text-stroke:0.3px #fff;">The Confidential</div>
<div class="t" style="left:504.50px;top:626.63px;font-size:16.5px;line-height:16.5px;color:#fff;font-weight:normal;transform:scaleX(1.0736);transform-origin:0 0;-webkit-text-stroke:0.3px #fff;">text is now light</div>
<div class="t" style="left:510.40px;top:647.23px;font-size:16.5px;line-height:16.5px;color:#fff;font-weight:normal;transform:scaleX(1.0737);transform-origin:0 0;-webkit-text-stroke:0.3px #fff;">grey and 95%</div>
<div class="t" style="left:517.00px;top:668.23px;font-size:16.5px;line-height:16.5px;color:#fff;font-weight:normal;transform:scaleX(1.0760);transform-origin:0 0;-webkit-text-stroke:0.3px #fff;">transparent.</div>
<div class="r" style="left:785px;top:295px;width:352px;height:500px;background:#e6e6e6;"></div>
<div class="t" style="left:800.70px;top:311.44px;font-size:25px;line-height:25px;color:#3a8a66;font-weight:normal;transform:scaleX(0.9994);transform-origin:0 0;">Format Shape</div>
<svg class="r" style="left:0px;top:0px;pointer-events:none;" width="1139" height="824" viewBox="0 0 1139 824"><path d="M1053.5 318 h11 l-5.5 6.5 z" fill="#6b6b6b"/><path d="M1104.5 315.5 L1116 327 M1116 315.5 L1104.5 327" stroke="#6b6b6b" stroke-width="2" fill="none"/><path d="M799 436.5 H809 L817.7 427 L826.5 436.5 H1122" stroke="#cfcfcf" stroke-width="1" fill="none"/><rect x="804" y="409.2" width="30" height="7.6" fill="#217346"/><path d="M858 409 L861 415 L869 415 L872 409" stroke="#c8c8c8" stroke-width="1" fill="none"/><rect x="897.5" y="390.5" width="25" height="22" fill="#fff" stroke="#6b6b6b" stroke-width="1"/><path d="M912 393.5 H920 M912 396.5 H920 M912 399.5 H920 M912 402.5 H920 M900 405.5 H920 M900 408.5 H920" stroke="#6b6b6b" stroke-width="1"/><path d="M806.5 457 L816 457 L816 448 Z" fill="#3c3c3c"/><circle cx="833.2" cy="487.3" r="7" fill="#fff" stroke="#c3c3c3" stroke-width="1"/><circle cx="833.2" cy="516.1" r="7" fill="#fff" stroke="#c3c3c3" stroke-width="1"/><circle cx="833.2" cy="545" r="7" fill="#fff" stroke="#c3c3c3" stroke-width="1"/><circle cx="833.2" cy="574" r="7" fill="#fff" stroke="#c3c3c3" stroke-width="1"/><circle cx="833.2" cy="603" r="7" fill="#fff" stroke="#c3c3c3" stroke-width="1"/><circle cx="833.2" cy="516.1" r="3.2" fill="#6b6b6b"/><rect x="825" y="621" width="274" height="1" fill="#d4d4d4"/><rect x="1048.5" y="630.5" width="50" height="29" fill="#fff" stroke="#c6c6c6"/><rect x="1057.4" y="650" width="19.7" height="4.7" fill="#000"/><path d="M1060.5 644 L1066.8 637.5 L1073 644 L1066.8 649.8 Z" fill="#fff" stroke="#777" stroke-width="1.1"/><circle cx="1066.5" cy="636.5" r="2" fill="none" stroke="#777" stroke-width="1"/><path d="M1071 640 Q1076.5 642 1073.5 648.5 Q1074 643 1071 640 Z" fill="#3a7cc8" stroke="#3a7cc8" stroke-width="1"/><path d="M1083.5 641 h9 l-4.5 5 z" fill="#6b6b6b"/><rect x="930" y="679" width="70" height="1.5" fill="#7a7a7a"/><rect x="996" y="672" width="3.5" height="15" fill="#6b6b6b"/><rect x="1009.5" y="666.5" width="88" height="26" fill="#fff" stroke="#c6c6c6"/><path d="M1084 676 h8 l-4 -4.5 z M1084 683 h8 l-4 4.5 z" fill="#6b6b6b"/><path d="M809 713.5 L809 723.5 L814 718.5 Z" fill="none" stroke="#8a8a8a" stroke-width="1"/><defs><filter id="sh2" x="-10%" y="-30%" width="120%" height="160%"><feGaussianBlur in="SourceAlpha" stdDeviation="1.4"/><feOffset dx="1" dy="2.2"/><feComponentTransfer><feFuncA type="linear" slope="0.45"/></feComponentTransfer><feMerge><feMergeNode/><feMergeNode in="SourceGraphic"/></feMerge></filter></defs><rect filter="url(#sh2)" x="905.5" y="346" width="120" height="33.5" rx="16.7" fill="none" stroke="#fb3e45" stroke-width="3.4"/><rect filter="url(#sh2)" x="799" y="379.2" width="41.5" height="51.3" rx="20.5" fill="none" stroke="#fb3e45" stroke-width="3.4"/><rect filter="url(#sh2)" x="814.5" y="661.5" width="299.5" height="38.7" rx="19" fill="none" stroke="#fb3e45" stroke-width="3.4"/></svg>
<div class="t" style="left:809.70px;top:386.38px;font-size:24px;line-height:24px;color:#217346;font-weight:normal;transform:scaleX(1.0375);transform-origin:0 0;-webkit-text-stroke:0.7px #217346;">A</div>
<div class="t" style="left:855.50px;top:388.53px;font-size:23px;line-height:23px;color:#fff;font-weight:bold;transform:scaleX(1.0843);transform-origin:0 0;-webkit-text-stroke:1.2px #8a8a8a;">A</div>
<div class="t" style="left:902.00px;top:392.12px;font-size:12.5px;line-height:12.5px;color:#6b6b6b;font-weight:normal;transform:scaleX(1.0119);transform-origin:0 0;">A</div>
<div class="t" style="left:804.30px;top:357.15px;font-size:14px;line-height:14px;color:#444;font-weight:normal;transform:scaleX(1.0302);transform-origin:0 0;">Shape Options</div>
<div class="t" style="left:921.70px;top:357.15px;font-size:14px;line-height:14px;color:#262626;font-weight:bold;transform:scaleX(1.0391);transform-origin:0 0;">Text Options</div>
<div class="t" style="left:825.20px;top:446.85px;font-size:14px;line-height:14px;color:#217346;font-weight:bold;transform:scaleX(1.0077);transform-origin:0 0;">Text Fill</div>
<div class="t" style="left:846.80px;top:480.75px;font-size:14px;line-height:14px;color:#444;font-weight:normal;transform:scaleX(1.1286);transform-origin:0 0;">No fill</div>
<div class="r" style="left:846.80px;top:494.60px;width:11.41px;height:1px;background:#444;"></div>
<div class="t" style="left:846.80px;top:509.65px;font-size:14px;line-height:14px;color:#444;font-weight:normal;transform:scaleX(1.1120);transform-origin:0 0;">Solid fill</div>
<div class="r" style="left:846.80px;top:523.50px;width:10.38px;height:1px;background:#444;"></div>
<div class="t" style="left:846.80px;top:538.55px;font-size:14px;line-height:14px;color:#444;font-weight:normal;transform:scaleX(1.0621);transform-origin:0 0;">Gradient fill</div>
<div class="r" style="left:846.80px;top:552.40px;width:11.57px;height:1px;background:#444;"></div>
<div class="t" style="left:846.80px;top:567.45px;font-size:14px;line-height:14px;color:#444;font-weight:normal;transform:scaleX(1.0687);transform-origin:0 0;">Picture or texture fill</div>
<div class="r" style="left:846.80px;top:581.30px;width:9.98px;height:1px;background:#444;"></div>
<div class="t" style="left:846.80px;top:596.35px;font-size:14px;line-height:14px;color:#444;font-weight:normal;transform:scaleX(1.0643);transform-origin:0 0;">Pattern fill</div>
<div class="r" style="left:856.74px;top:610.20px;width:8.29px;height:1px;background:#444;"></div>
<div class="r" style="left:834.80px;top:652.60px;width:10.62px;height:1px;background:#444;"></div>
<div class="r" style="left:834.80px;top:687.90px;width:8.58px;height:1px;background:#444;"></div>
<div class="t" style="left:834.80px;top:638.75px;font-size:14px;line-height:14px;color:#444;font-weight:normal;transform:scaleX(1.0507);transform-origin:0 0;">Color</div>
<div class="t" style="left:834.80px;top:674.05px;font-size:14px;line-height:14px;color:#444;font-weight:normal;transform:scaleX(1.0035);transform-origin:0 0;">Transparency</div>
<div class="t" style="left:1015.90px;top:673.50px;font-size:13px;line-height:13px;color:#444;font-weight:normal;transform:scaleX(0.9231);transform-origin:0 0;">95%</div>
<div class="t" style="left:825.50px;top:711.75px;font-size:14px;line-height:14px;color:#333;font-weight:bold;transform:scaleX(1.0413);transform-origin:0 0;">Text Outline</div>
<div class="r" style="left:1px;top:766px;width:783px;height:29px;background:#e6e6e6;"></div>
<div class="r" style="left:1px;top:766px;width:760px;height:1px;background:#c6c6c6;"></div>
<div class="r" style="left:104px;top:766px;width:78px;height:26px;background:#fff;border-left:1px solid #c6c6c6;border-right:1px solid #c6c6c6;"></div>
<div class="r" style="left:104px;top:790px;width:78px;height:2px;background:#217346;"></div>
<div class="t" style="left:115.70px;top:769.46px;font-size:16px;line-height:16px;color:#217346;font-weight:bold;transform:scaleX(1.0152);transform-origin:0 0;">Sheet1</div>
<svg class="r" style="left:0px;top:0px;pointer-events:none;" width="1139" height="824" viewBox="0 0 1139 824"><path d="M34 776 L29 781 L34 786 Z" fill="#c4c4c4"/><path d="M58 776 L63 781 L58 786 Z" fill="#c4c4c4"/><circle cx="225" cy="781" r="9.5" fill="none" stroke="#7a7a7a" stroke-width="1.2"/><path d="M220 781 H230 M225 776 V786" stroke="#6b6b6b" stroke-width="1.5"/><path d="M470 772 v2 M470 778 v2 M470 784 v2" stroke="#a6a6a6" stroke-width="2"/><rect x="487" y="771" width="254" height="18" fill="#dadada"/><rect x="486.5" y="771.5" width="18" height="17" fill="#fff" stroke="#c8c8c8"/><path d="M498 775.5 L493 780 L498 784.5 Z" fill="#444"/><rect x="504.5" y="771.5" width="192" height="17" fill="#fff" stroke="#c8c8c8"/><rect x="742.5" y="771.5" width="18" height="17" fill="#fff" stroke="#c8c8c8"/><path d="M749 775.5 L754 780 L749 784.5 Z" fill="#444"/></svg>
<div class="r" style="left:1px;top:795px;width:1136px;height:27px;background:#f3f3f3;border-top:1px solid #d6d6d6;"></div>
<div class="r" style="left:790px;top:796px;width:41px;height:26px;background:#c6c6c6;"></div>
<div class="t" style="left:9.10px;top:802.50px;font-size:13px;line-height:13px;color:#444;font-weight:normal;transform:scaleX(0.9415);transform-origin:0 0;">Ready</div>
<div class="t" style="left:677.40px;top:802.80px;font-size:13px;line-height:13px;color:#444;font-weight:normal;transform:scaleX(0.9721);transform-origin:0 0;">Display Settings</div>
<div class="t" style="left:1085.00px;top:803.00px;font-size:13px;line-height:13px;color:#444;font-weight:normal;transform:scaleX(0.8946);transform-origin:0 0;">100%</div>
<svg class="r" style="left:0px;top:0px;pointer-events:none;" width="1139" height="824" viewBox="0 0 1139 824"><circle cx="70" cy="805" r="3.5" fill="#555"/><rect x="67.5" y="804.5" width="13" height="11" fill="#fff" stroke="#555"/><rect x="72" y="802" width="9" height="3" fill="#555"/><circle cx="70" cy="805" r="3.5" fill="#555"/><path d="M70 809.5 h9 M70 812.5 h9" stroke="#888" stroke-width="1" stroke-dasharray="1.5,1"/><rect x="656" y="800" width="19" height="13" rx="1" fill="#5a5a5a"/><path d="M659 816 h8" stroke="#5a5a5a" stroke-width="1.5"/><circle cx="671" cy="813" r="4.5" fill="#5a5a5a" stroke="#f3f3f3" stroke-width="1"/><circle cx="671" cy="813" r="1.5" fill="#f3f3f3"/><path d="M803.5 801.5 h15 v15 h-15 z M803.5 806.5 h15 M803.5 811.5 h15 M808.5 801.5 v15 M813.5 801.5 v15" stroke="#666" stroke-width="1" fill="none"/><path d="M844.5 801.5 h15 v15 h-15 z" stroke="#666" stroke-width="1" fill="none"/><path d="M847.5 803.5 h9 v11 h-9 z M849 806.5 h6 M849 809 h6 M849 811.5 h6" stroke="#666" stroke-width="1" fill="none"/><path d="M886.5 801.5 h15 v15 h-15 z M886.5 809.5 h9 v-8 M890.5 801.5 v8" stroke="#777" stroke-width="1" fill="none"/><rect x="920" y="808" width="10" height="2" fill="#555"/><rect x="934" y="808.5" width="124" height="1" fill="#9a9a9a"/><rect x="994" y="802" width="6" height="14" fill="#6b6b6b"/><path d="M1062 809 h11 M1067.5 803.5 v11" stroke="#555" stroke-width="2"/></svg>
</body></html>
